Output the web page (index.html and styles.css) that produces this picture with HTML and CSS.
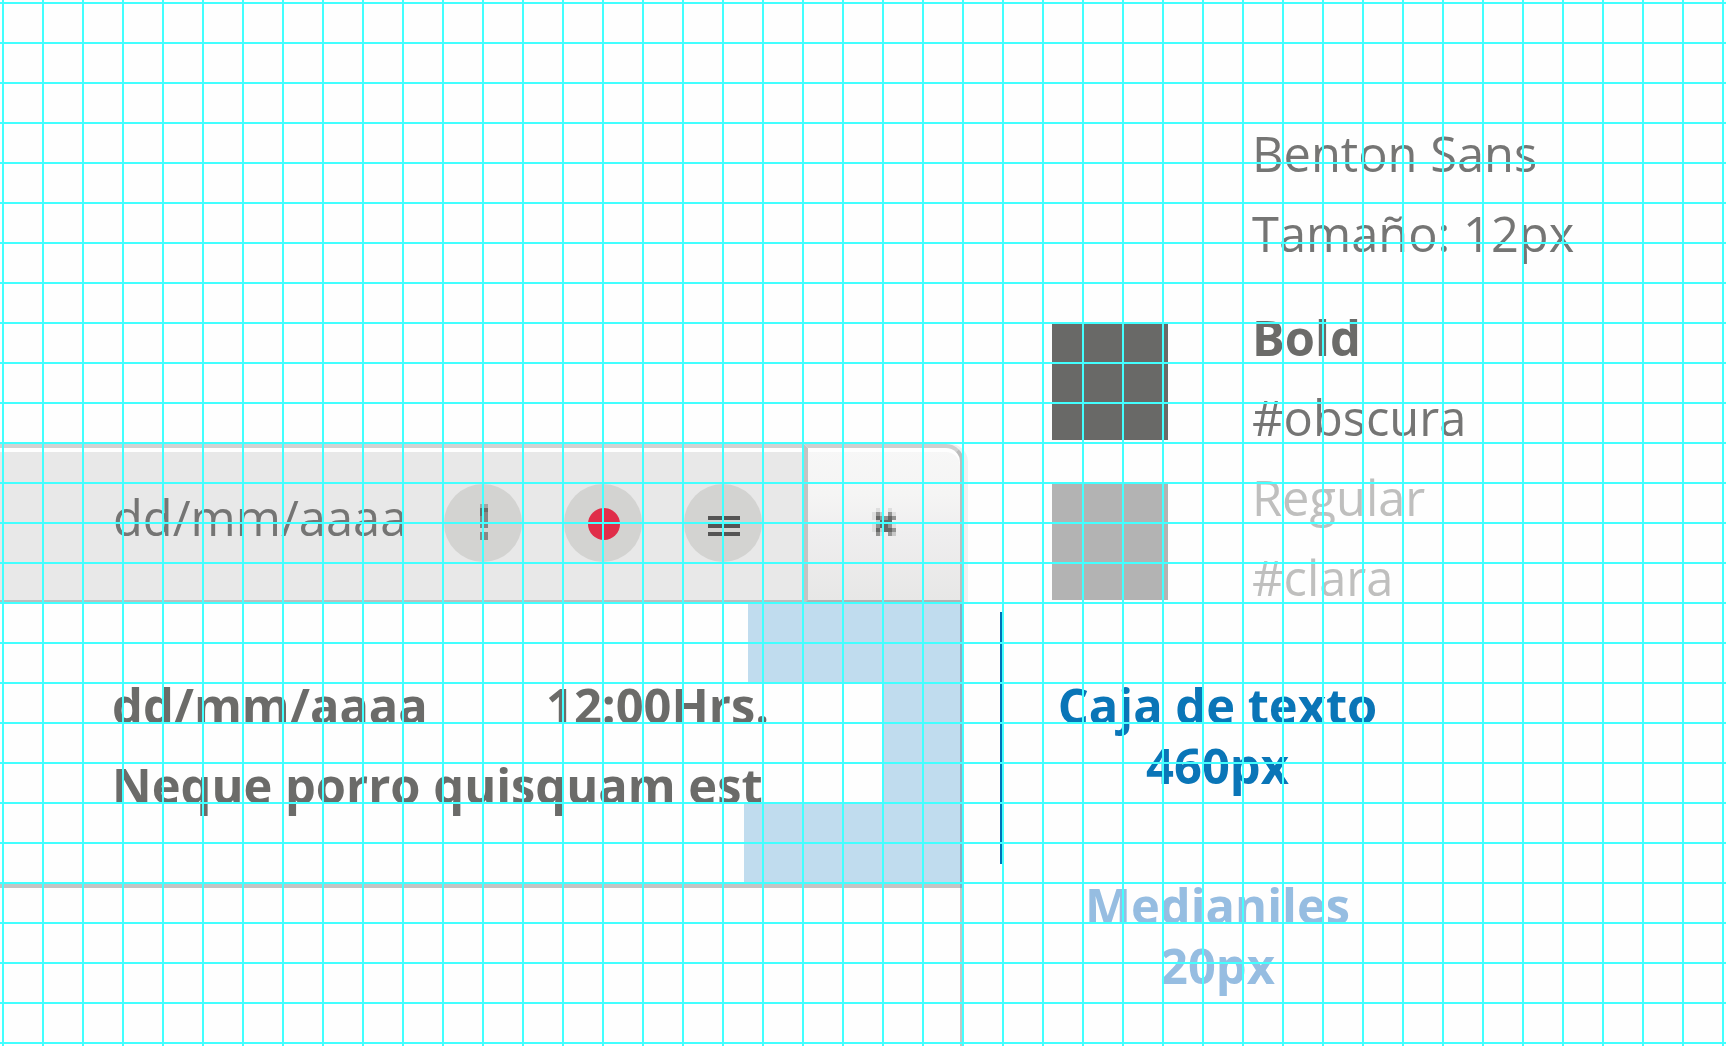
FILE: index.html
```
<!DOCTYPE html>
<html lang="es">
<head>
<meta charset="utf-8">
<title>Guía de estilos: cabecera</title>
<link rel="stylesheet" href="styles.css">
</head>
<body>
<main class="sheet">
  <section class="module">
    <header class="bar">
      <div class="bar-main">
        <span class="bar-date">dd/mm/aaaa</span>
        <span class="badge">
          <svg width="8" height="36" viewBox="0 0 8 36" shape-rendering="crispEdges">
            <path fill="#a3a3a2" d="M0 0h8v4H0z"/><path fill="#696967" d="M0 4h8v4H0zM0 8h4v4H0z"/><path fill="#858584" d="M4 8h4v8H4zM0 12h4v4H0zM0 16h8v8H0zM0 28h8v8H0z"/>
          </svg>
        </span>
        <span class="badge"><i class="dot"></i></span>
        <span class="badge"><span class="menu"><i></i><i></i><i></i></span></span>
      </div>
      <div class="bar-close">
        <svg width="24" height="28" viewBox="0 0 24 28" shape-rendering="crispEdges">
          <path fill="#dedede" d="M4 0h4v4H4zM16 0h4v4h-4zM20 4h4v4h-4zM0 4h4v8H0zM0 16h4v8H0zM8 24h4v4H8zM20 16h4v4h-4z"/>
          <path fill="#929291" d="M4 4h4v4H4zM8 8h8v4H8zM20 8h4v4h-4zM16 4h4v4h-4zM4 16h4v4H4zM16 16h4v4h-4zM20 20h4v4h-4zM4 24h4v4H4zM16 24h4v4h-4z"/>
          <path fill="#c8c8c8" d="M8 4h4v4H8zM4 12h4v4H4zM20 24h4v4h-4zM8 20h4v4H8z"/>
          <path fill="#676766" d="M4 8h4v4H4zM16 8h4v4h-4zM8 12h12v4H8zM8 16h8v4H8zM4 20h4v4H4zM12 20h8v4h-8z"/>
        </svg>
      </div>
    </header>
    <div class="content">
      <p class="line"><span class="date">dd/mm/aaaa</span><span>12:00Hrs.</span></p>
      <p class="line">Neque porro quisquam est</p>
    </div>
    <div class="tail"></div>
  </section>
  <div class="measure"></div>
  <aside class="notes">
    <div class="type">
      <p>Benton Sans</p>
      <p>Tamaño: 12px</p>
    </div>
    <div class="colors">
      <div class="swatches"><div class="swatch dark"></div><div class="swatch light"></div></div>
      <div class="names">
        <p class="strong">Bold</p>
        <p>#obscura</p>
        <p class="pale">Regular</p>
        <p class="pale">#clara</p>
      </div>
    </div>
    <div class="label blue">Caja de texto<br>460px</div>
    <div class="label sky">Medianiles<br>20px</div>
  </aside>
</main>
<div class="grid-lines"></div>
</body>
</html>
```
FILE: styles.css
```
* { box-sizing: border-box; }
html, body { height: 100%; }
body {
  margin: 0;
  overflow: hidden;
  background: #fefefe;
  color: #757574;
  font: 400 48.8px/80px "Open Sans", "Noto Sans", sans-serif;
}
p { margin: 0; white-space: nowrap; }

.sheet {
  display: grid;
  grid-template-columns: 968px 32px 1fr;
  height: 1046px;
  overflow: hidden;
}

/* Module with header bar and text box */
.module { display: flex; flex-direction: column; padding-top: 444px; }
.bar { display: flex; height: 160px; flex: none; }
.bar-main {
  width: 804px;
  display: flex;
  align-items: center;
  background: #e8e8e8;
  border-top: 4px solid #d2d2d2;
  border-bottom: 4px solid #bcbcbc;
  box-shadow: inset 0 4px #fefefe;
  padding-left: 113px;
}
.bar-date { width: 331px; position: relative; top: -7px; }
.badge {
  width: 78px;
  height: 78px;
  margin-right: 42px;
  border-radius: 50%;
  background: #d3d3d1;
  display: flex;
  align-items: center;
  justify-content: center;
  flex: none;
  position: relative;
  top: -1px;
}
.badge svg { position: relative; left: 1px; top: -1px; }
.dot { width: 32px; height: 32px; border-radius: 50%; background: #e02d49; position: relative; left: 1px; top: 1px; }
.menu { display: grid; gap: 4px; position: relative; left: 1px; top: 3px; }
.menu i { width: 32px; height: 4px; background: #545454; }
.badge:nth-of-type(4) { margin-right: 0; }
.bar-close {
  width: 160px;
  border: 4px solid;
  border-color: #cfcfcf #bcbcbc #b2b2b2 #c3c3c3;
  border-radius: 0 18px 0 0;
  box-shadow: inset 0 4px #fefefe, 4px 0 #f1f1f1;
  background: linear-gradient(#f7f7f7, #f5f5f4 30%, #efeeef 55%, #e7e7e6);
  padding: 60px 0 0 64px;
  line-height: 0;
}
.content {
  width: 964px;
  height: 284px;
  flex: none;
  padding: 61px 0 0 112px;
  border-right: 4px solid #8dabc1;
  background:
    linear-gradient(#c4c4c4, #c4c4c4) 0 280px / 964px 4px no-repeat,
    linear-gradient(#c0dcee, #c0dcee) 748px 0 / 212px 80px no-repeat,
    linear-gradient(#c0dcee, #c0dcee) 884px 80px / 76px 120px no-repeat,
    linear-gradient(#c0dcee, #c0dcee) 744px 200px / 216px 80px no-repeat;
}
.line { display: flex; font-weight: 700; color: #6b6b69; }
.date { width: 434px; }
.tail { width: 964px; flex: 1; border-right: 4px solid #c4c4c4; }

.measure { width: 4px; height: 252px; margin: 612px 0 0 32px; background: #0070b4; }

/* Annotations */
.notes { padding: 113px 0 0 52px; }
.type { padding-left: 200px; }
.colors { display: flex; margin-top: 24px; }
.swatches { display: grid; gap: 44px; align-content: start; width: 200px; padding-top: 27px; }
.swatch { width: 116px; height: 116px; }
.dark { background: #696967; }
.light { background: #b3b3b3; }
.strong { font-weight: 700; color: #6b6b69; }
.pale { color: #bfbfbe; }
.label {
  width: 331px;
  margin-top: 58px;
  font-weight: 700;
  line-height: 60px;
  text-align: center;
}
.blue { color: #0a75b7; }
.sky { color: #96bde1; margin-top: 80px; }

.grid-lines {
  position: absolute;
  inset: 0;
  pointer-events: none;
  background:
    linear-gradient(90deg, #42ffff 2px, transparent 2px) 2px 0 / 40px 40px,
    linear-gradient(#42ffff 2px, transparent 2px) 0 2px / 40px 40px;
}
```
